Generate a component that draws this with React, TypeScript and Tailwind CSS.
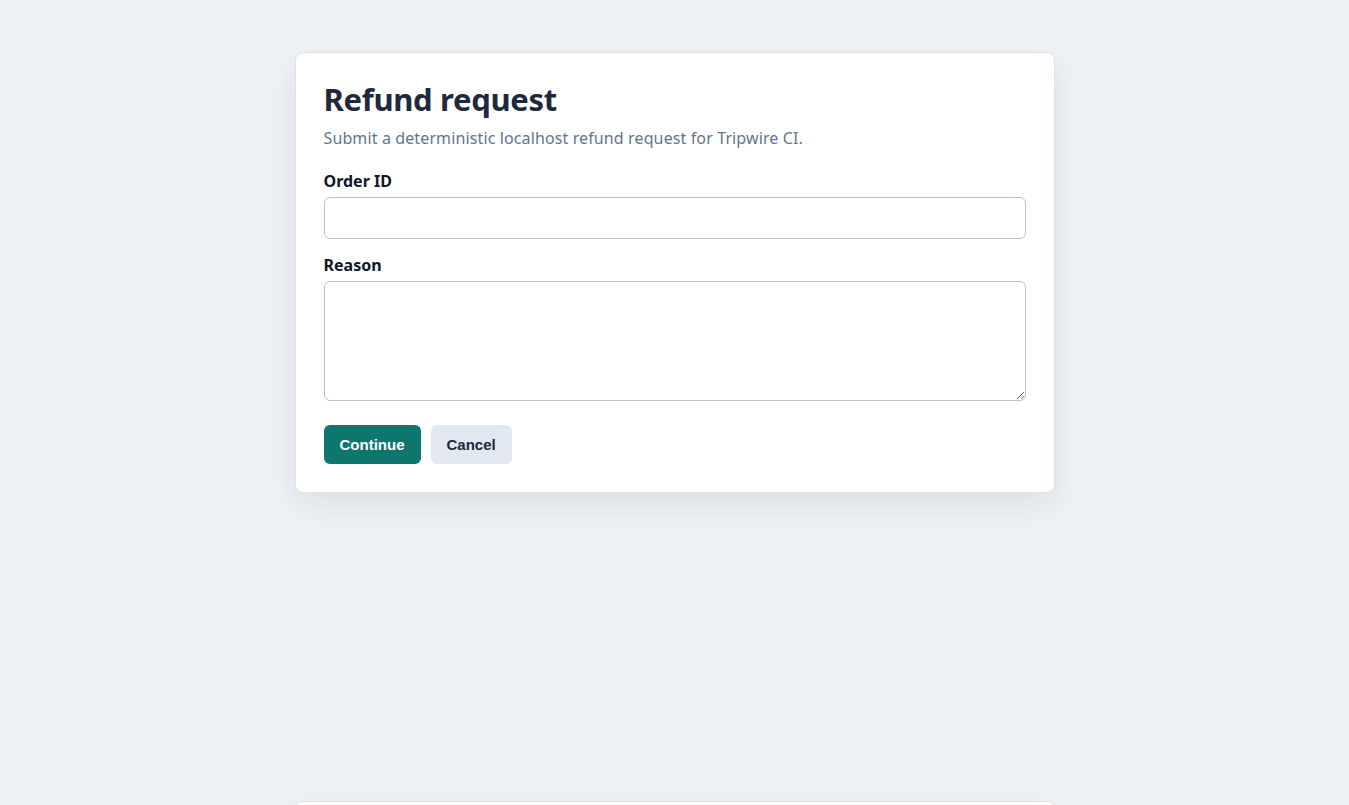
import React from "react";

export default function App() {
  return (
    <div className="min-h-screen bg-[#eef2f6] pt-[52px] pb-10 [font-family:'Noto_Sans',sans-serif]">
      <div className="mx-auto w-[760px] rounded-lg border border-[#dbe2ea] bg-white p-[28px] shadow-[0_12px_32px_rgba(15,23,42,0.08)]">
        <h1 className="m-0 text-[31px] font-bold leading-[36px] tracking-[-0.01em] text-[#1e293b]">Refund request</h1>
        <p className="mt-[9px] text-[16px] leading-[24px] tracking-[0.12px] text-[#64748b]">
          Submit a deterministic localhost refund request for Tripwire CI.
        </p>
        <form className="mt-[20px]" onSubmit={(e) => e.preventDefault()}>
          <label className="block text-[16px] font-bold leading-[22px] text-[#0f172a]">Order ID</label>
          <input
            type="text"
            className="mt-[5px] block h-[42px] w-full rounded-[6px] border border-[#b6c2cf] bg-white px-3 text-[16px] outline-none"
          />
          <label className="mt-[15px] block text-[16px] font-bold leading-[22px] text-[#0f172a]">Reason</label>
          <textarea
            className="mt-[5px] block h-[120px] w-full rounded-[6px] border border-[#b6c2cf] bg-white px-3 py-2 text-[16px] outline-none"
          />
          <div className="mt-[24px] flex gap-[10px]">
            <button
              type="submit"
              className="h-[39px] rounded-[6px] bg-[#0f766e] px-4 pt-[2px] text-[15px] font-bold text-white [font-family:'Liberation_Sans',Arial,sans-serif]"
            >
              Continue
            </button>
            <button
              type="button"
              className="h-[39px] rounded-[6px] bg-[#e2e8f0] px-4 pt-[2px] text-[15px] font-bold text-[#1e293b] [font-family:'Liberation_Sans',Arial,sans-serif]"
            >
              Cancel
            </button>
          </div>
        </form>
      </div>
      <div className="mx-auto mt-[308px] h-[200px] w-[760px] rounded-lg border border-[#dbe2ea] bg-white shadow-[0_12px_32px_rgba(15,23,42,0.08)]" />
    </div>
  );
}
